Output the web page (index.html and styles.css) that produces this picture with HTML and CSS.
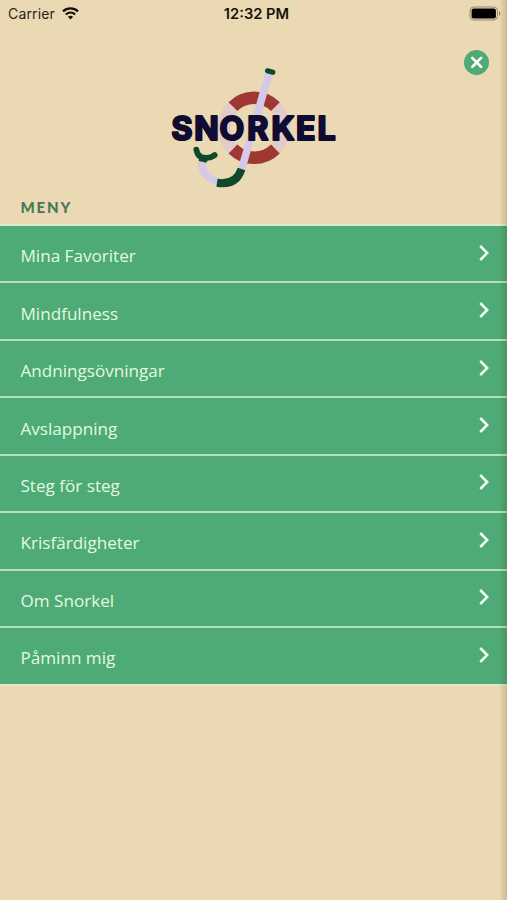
FILE: index.html
```
<!DOCTYPE html>
<html lang="sv">
<head>
    <meta charset="UTF-8">
    <meta name="viewport" content="width=device-width, initial-scale=1.0">
    <title>Snorkel - Meny</title>
    <link rel="stylesheet" href="styles.css">
</head>
<body>

    <!-- Arrow shared by the menu rows -->
    <svg width="0" height="0" class="icons">
        <symbol id="arrow" viewBox="0 0 12 18">
            <path d="M2.2 2 9.2 9l-7 7"/>
        </symbol>
    </svg>

    <!-- Status bar -->
    <div class="status-bar">
        <div class="carrier">
            <span>Carrier</span>
            <svg width="17" height="13" viewBox="0 0 17 13" fill="none" stroke="#16120d" stroke-width="2.3">
                <path d="M1 4.4C5.2.4 11.8.4 16 4.4"/>
                <path d="M3.8 7.5c2.7-2.5 6.7-2.5 9.4 0"/>
                <path d="M8.5 12.4 5.9 9.7c1.5-1.3 3.7-1.3 5.2 0z" fill="#16120d" stroke="none"/>
            </svg>
        </div>
        <span class="clock">12:32 PM</span>
        <svg class="battery" width="32" height="15" viewBox="0 0 32 15">
            <rect x="1" y="1" width="27.5" height="13" rx="3.8" fill="none" stroke="#97876e"/>
            <rect x="2.6" y="2.6" width="24.3" height="9.8" rx="2" fill="#000"/>
            <path d="M30 5.2c1.8.8 1.8 3.8 0 4.6z" fill="#97765a"/>
        </svg>
    </div>

    <!-- Logo and close button -->
    <header class="header">
        <svg class="logo" width="190" height="135" viewBox="0 0 190 135" fill="none">
            <circle cx="94.2" cy="67.8" r="30" stroke="#e2cccb" stroke-width="12.5"/>
            <path d="M73 46.6a30 30 0 0 1 42.4 0M73 89a30 30 0 0 0 42.4 0" stroke="#9f3732" stroke-width="12.5"/>
            <path d="M109 13 82 108C77 125 64 124 56 121C47 118 42 111 41.5 102" stroke="#d4c9e8" stroke-width="7.6"/>
            <path d="M81.5 109C77.5 121.5 68 124.5 57 122.8" stroke="#0f482b" stroke-width="8"/>
            <path d="M107.6 10.8l5.2 1.4" stroke="#0f482b" stroke-width="5.2" stroke-linecap="round"/>
            <path d="M36.3 89.6C37.3 94.5 40.2 97.8 44.5 97.7C48.4 98.5 51.7 97.3 54.6 95.1" stroke="#0f482b" stroke-width="5.8" stroke-linecap="round"/>
            <path d="M39.5 96.5 48 99.5 46.4 102.8 38.6 101z" fill="#0f482b"/>
            <text class="logo-text" x="11.6 34.2 59.4 87.3 111.5 136 157.6" y="79.7">SNORKEL</text>
        </svg>
        <button class="close-btn" aria-label="Stäng">
            <svg width="25" height="25" viewBox="0 0 25 25" stroke="#fff" stroke-width="2.7" stroke-linecap="round">
                <path d="M8.3 7.9l8.8 9M17.1 7.9l-8.8 9"/>
            </svg>
        </button>
    </header>

    <h2 class="menu-title">MENY</h2>
    <ul class="menu">
        <li><a href="#">Mina Favoriter <svg class="arrow"><use href="#arrow"/></svg></a></li>
        <li><a href="#">Mindfulness <svg class="arrow"><use href="#arrow"/></svg></a></li>
        <li><a href="#">Andningsövningar <svg class="arrow"><use href="#arrow"/></svg></a></li>
        <li><a href="#">Avslappning <svg class="arrow"><use href="#arrow"/></svg></a></li>
        <li><a href="#">Steg för steg <svg class="arrow"><use href="#arrow"/></svg></a></li>
        <li><a href="#">Krisfärdigheter <svg class="arrow"><use href="#arrow"/></svg></a></li>
        <li><a href="#">Om Snorkel <svg class="arrow"><use href="#arrow"/></svg></a></li>
        <li><a href="#">Påminn mig <svg class="arrow"><use href="#arrow"/></svg></a></li>
    </ul>

    <div class="edge-shadow"></div>

</body>
</html>
```

FILE: styles.css
```
* {
    box-sizing: border-box;
}
body {
    font-family: "Open Sans", sans-serif;
    background-color: #ead9b2;
    margin: 0;
    min-height: 100vh;
    position: relative;
    overflow: hidden;
}
.icons {
    position: absolute;
}
/* Status bar */
.status-bar {
    display: grid;
    grid-template-columns: 1fr auto 1fr;
    align-items: center;
    height: 28px;
    padding: 0 6px 0 8px;
    font-family: Inter, sans-serif;
    font-size: 14px;
    color: #2c241c;
}
.carrier {
    display: flex;
    align-items: center;
    gap: 7px;
    margin-top: -2px;
}
.carrier span {
    letter-spacing: 0.15px;
}
.clock {
    margin: -1px 0 0 4px;
    font-weight: 600;
    font-size: 14.7px;
    color: #16120d;
}
.battery {
    justify-self: end;
    margin-top: -2px;
}
/* Header */
.header {
    height: 167px;
    padding: 32px 0 0 3px;
    text-align: center;
    position: relative;
}
.logo-text {
    font-family: Inter, sans-serif;
    font-weight: 700;
    font-size: 32px;
    fill: #100b30;
    stroke: #100b30;
    stroke-width: 2.2px;
    stroke-linejoin: round;
}
.close-btn {
    position: absolute;
    top: 22px;
    right: 18px;
    width: 25px;
    height: 25px;
    padding: 0;
    border: none;
    border-radius: 50%;
    background-color: #4eaa76;
}
.close-btn svg {
    display: block;
}
/* Menu */
.menu-title {
    margin: 0;
    height: 29px;
    padding-left: 20.5px;
    font-family: Lato, sans-serif;
    font-size: 15px;
    font-weight: 900;
    line-height: 24px;
    letter-spacing: 1.8px;
    color: #47785b;
}
.menu {
    list-style: none;
    margin: 0;
    padding: 0;
    border-top: 2px solid #d9efcc;
}
.menu a {
    display: flex;
    align-items: center;
    justify-content: space-between;
    height: 57.44px;
    padding: 4px 17px 0 20.5px;
    border-bottom: 2px solid #b4e2bf;
    background-color: #4eaa76;
    color: #e3fadf;
    font-size: 17.1px;
    text-decoration: none;
}
.menu li:last-child a {
    border-bottom-color: #dcebc6;
}
.arrow {
    width: 12px;
    height: 18px;
    margin-top: -6px;
    fill: none;
    stroke: #f0ffee;
    stroke-width: 2.5;
}
/* Shadow along the right edge */
.edge-shadow {
    position: absolute;
    top: 0;
    right: 0;
    bottom: 0;
    width: 8px;
    background: linear-gradient(to right, rgba(70, 40, 0, 0), rgba(70, 40, 0, 0.18));
    pointer-events: none;
}
```
